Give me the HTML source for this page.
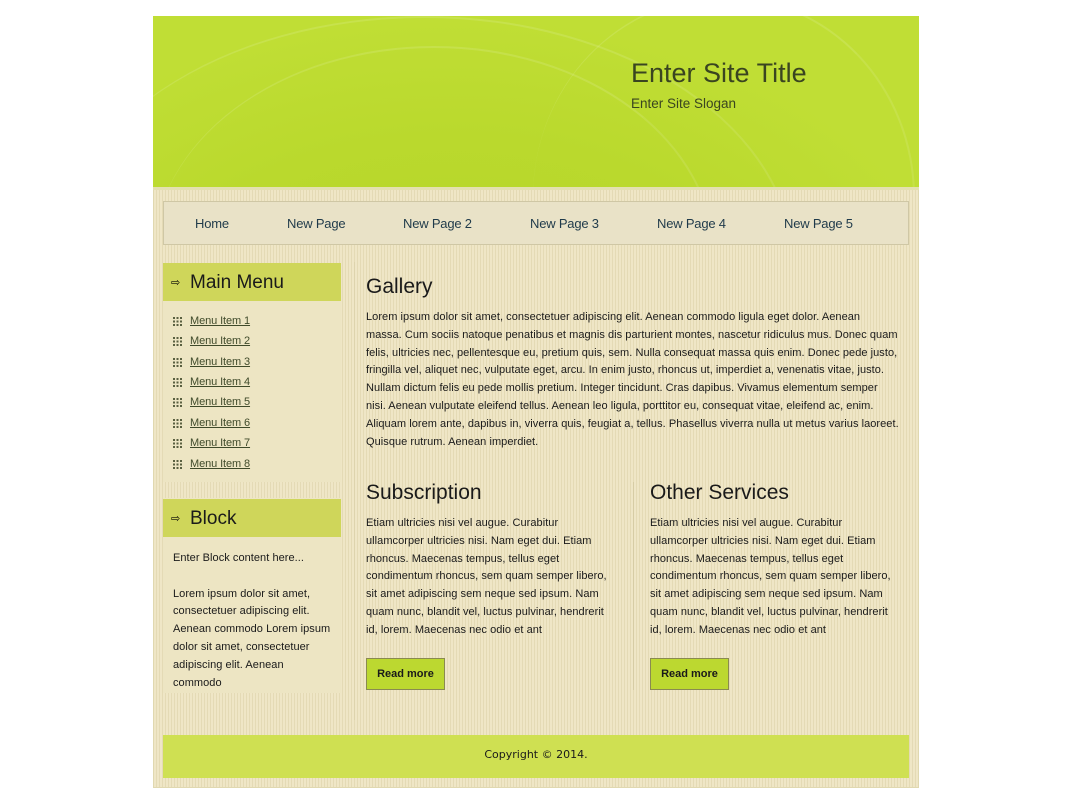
<!DOCTYPE html>
<html><head><meta charset="utf-8"><style>
*{font-family:"Liberation Sans",Arial,Helvetica,sans-serif}
body{margin:0;background:#fff;width:1073px;height:796px;overflow:hidden;position:relative}
.pg{position:absolute;left:153px;top:16px;width:766px;height:772px;background:repeating-linear-gradient(90deg,#efe6c6 0,#efe6c6 2px,#e4dab5 2px,#e4dab5 3px);border:1px solid #e0d8b0;box-sizing:border-box}
.hd{position:absolute;left:153px;top:16px;width:766px;height:174px;overflow:hidden;background:radial-gradient(ellipse 500px 300px at 300px 300px,#b4d62a 0,#bad92d 60%,#c0de35 100%);border-bottom:3px solid #e3e0b0;box-sizing:border-box}
.hd div{position:absolute;border-radius:50%;border-top:2px solid rgba(255,255,255,0.12);border-right:2px solid rgba(255,255,255,0.1)}
.t1{position:absolute;left:631px;top:58px;font-size:27px;color:#3a4520}
.t2{position:absolute;left:631px;top:96px;font-size:13.5px;color:#3a4520}
.nav{position:absolute;left:163px;top:201px;width:746px;height:44px;background:#e9e2c7;border:1px solid #cfc7a5;box-sizing:border-box}
.nav span{position:absolute;top:14px;font-size:13px;letter-spacing:-0.2px;color:#1f3a4a}
.mh{position:absolute;left:163px;width:178px;height:38px;background:#cfd65a}
.mh b{position:absolute;left:27px;top:9px;font-size:19px;font-weight:normal;color:#1a1a1a}
.mh i{position:absolute;left:8px;top:13px;font-style:normal;font-size:11px}
.lc{position:absolute;left:163px;top:301px;width:178px;height:392px;background:#ede5c3}
.mi{position:absolute;left:190px;font-size:11px;letter-spacing:-0.1px;color:#3f4a2a;text-decoration:underline}
.ic{position:absolute;left:173px;width:9px;height:9px;background:repeating-linear-gradient(90deg,#5a6040 0 2px,transparent 2px 3.5px),#ede5c3;}
.ic:after{content:"";position:absolute;inset:0;background:repeating-linear-gradient(0deg,transparent 0 2px,#ede5c3 2px 3.5px)}
p{margin:0;font-size:11px;letter-spacing:0.05px;line-height:17.8px;color:#1a1a1a;position:absolute;white-space:nowrap}
h2{margin:0;position:absolute;font-size:21px;font-weight:normal;color:#1a1a1a}
.btn{position:absolute;width:79px;height:32px;background:#bcd830;border:1px solid #8a8a50;box-sizing:border-box;font-size:11px;font-weight:bold;text-align:center;line-height:31px;color:#1a1a1a}
.ft{position:absolute;left:163px;top:735px;width:746px;height:43px;background:#cfe052;text-align:center;font-size:11px;line-height:40px;color:#1a1a1a}
.ft span{font-family:"DejaVu Sans",sans-serif}
</style></head><body>
<div class="pg"></div>
<div class="hd"><div style="left:-100px;top:0;width:740px;height:500px"></div><div style="left:0;top:30px;width:560px;height:420px"></div><div style="left:380px;top:-20px;width:380px;height:400px"></div></div>
<div class="t1">Enter Site Title</div>
<div class="t2">Enter Site Slogan</div>
<div class="nav"><span style="left:31px">Home</span><span style="left:123px">New Page</span><span style="left:239px">New Page 2</span><span style="left:366px">New Page 3</span><span style="left:493px">New Page 4</span><span style="left:620px">New Page 5</span></div>
<div class="lc"></div>
<div class="mh" style="top:263px"><i>⇨</i><b>Main Menu</b></div>
<div class="ic" style="top:317px"></div><a class="mi" style="top:315px">Menu Item 1</a>
<div class="ic" style="top:337px"></div><a class="mi" style="top:335px">Menu Item 2</a>
<div class="ic" style="top:358px"></div><a class="mi" style="top:356px">Menu Item 3</a>
<div class="ic" style="top:378px"></div><a class="mi" style="top:376px">Menu Item 4</a>
<div class="ic" style="top:398px"></div><a class="mi" style="top:396px">Menu Item 5</a>
<div class="ic" style="top:419px"></div><a class="mi" style="top:417px">Menu Item 6</a>
<div class="ic" style="top:439px"></div><a class="mi" style="top:437px">Menu Item 7</a>
<div class="ic" style="top:460px"></div><a class="mi" style="top:458px">Menu Item 8</a>
<div style="position:absolute;left:163px;top:482px;width:178px;height:16px;background:repeating-linear-gradient(90deg,#efe6c6 0,#efe6c6 2px,#e4dab5 2px,#e4dab5 3px)"></div>
<div class="mh" style="top:499px"><i>⇨</i><b>Block</b></div>
<p style="left:173px;top:550px">Enter Block content here...<br><br>Lorem ipsum dolor sit amet,<br>consectetuer adipiscing elit.<br>Aenean commodo Lorem ipsum<br>dolor sit amet, consectetuer<br>adipiscing elit. Aenean<br>commodo</p>
<div style="position:absolute;left:354px;top:262px;width:1px;height:458px;background:#ddd3ad"></div>
<h2 style="left:366px;top:275px">Gallery</h2>
<p style="left:366px;top:309px">Lorem ipsum dolor sit amet, consectetuer adipiscing elit. Aenean commodo ligula eget dolor. Aenean<br>massa. Cum sociis natoque penatibus et magnis dis parturient montes, nascetur ridiculus mus. Donec quam<br>felis, ultricies nec, pellentesque eu, pretium quis, sem. Nulla consequat massa quis enim. Donec pede justo,<br>fringilla vel, aliquet nec, vulputate eget, arcu. In enim justo, rhoncus ut, imperdiet a, venenatis vitae, justo.<br>Nullam dictum felis eu pede mollis pretium. Integer tincidunt. Cras dapibus. Vivamus elementum semper<br>nisi. Aenean vulputate eleifend tellus. Aenean leo ligula, porttitor eu, consequat vitae, eleifend ac, enim.<br>Aliquam lorem ante, dapibus in, viverra quis, feugiat a, tellus. Phasellus viverra nulla ut metus varius laoreet.<br>Quisque rutrum. Aenean imperdiet.</p>
<h2 style="left:366px;top:481px">Subscription</h2>
<p style="left:366px;top:515px">Etiam ultricies nisi vel augue. Curabitur<br>ullamcorper ultricies nisi. Nam eget dui. Etiam<br>rhoncus. Maecenas tempus, tellus eget<br>condimentum rhoncus, sem quam semper libero,<br>sit amet adipiscing sem neque sed ipsum. Nam<br>quam nunc, blandit vel, luctus pulvinar, hendrerit<br>id, lorem. Maecenas nec odio et ant</p>
<div class="btn" style="left:366px;top:658px">Read more</div>
<div style="position:absolute;left:633px;top:482px;width:1px;height:208px;background:#d6cca5"></div>
<h2 style="left:650px;top:481px">Other Services</h2>
<p style="left:650px;top:515px">Etiam ultricies nisi vel augue. Curabitur<br>ullamcorper ultricies nisi. Nam eget dui. Etiam<br>rhoncus. Maecenas tempus, tellus eget<br>condimentum rhoncus, sem quam semper libero,<br>sit amet adipiscing sem neque sed ipsum. Nam<br>quam nunc, blandit vel, luctus pulvinar, hendrerit<br>id, lorem. Maecenas nec odio et ant</p>
<div class="btn" style="left:650px;top:658px">Read more</div>
<div class="ft"><span>Copyright © 2014.</span></div>
</body></html>
